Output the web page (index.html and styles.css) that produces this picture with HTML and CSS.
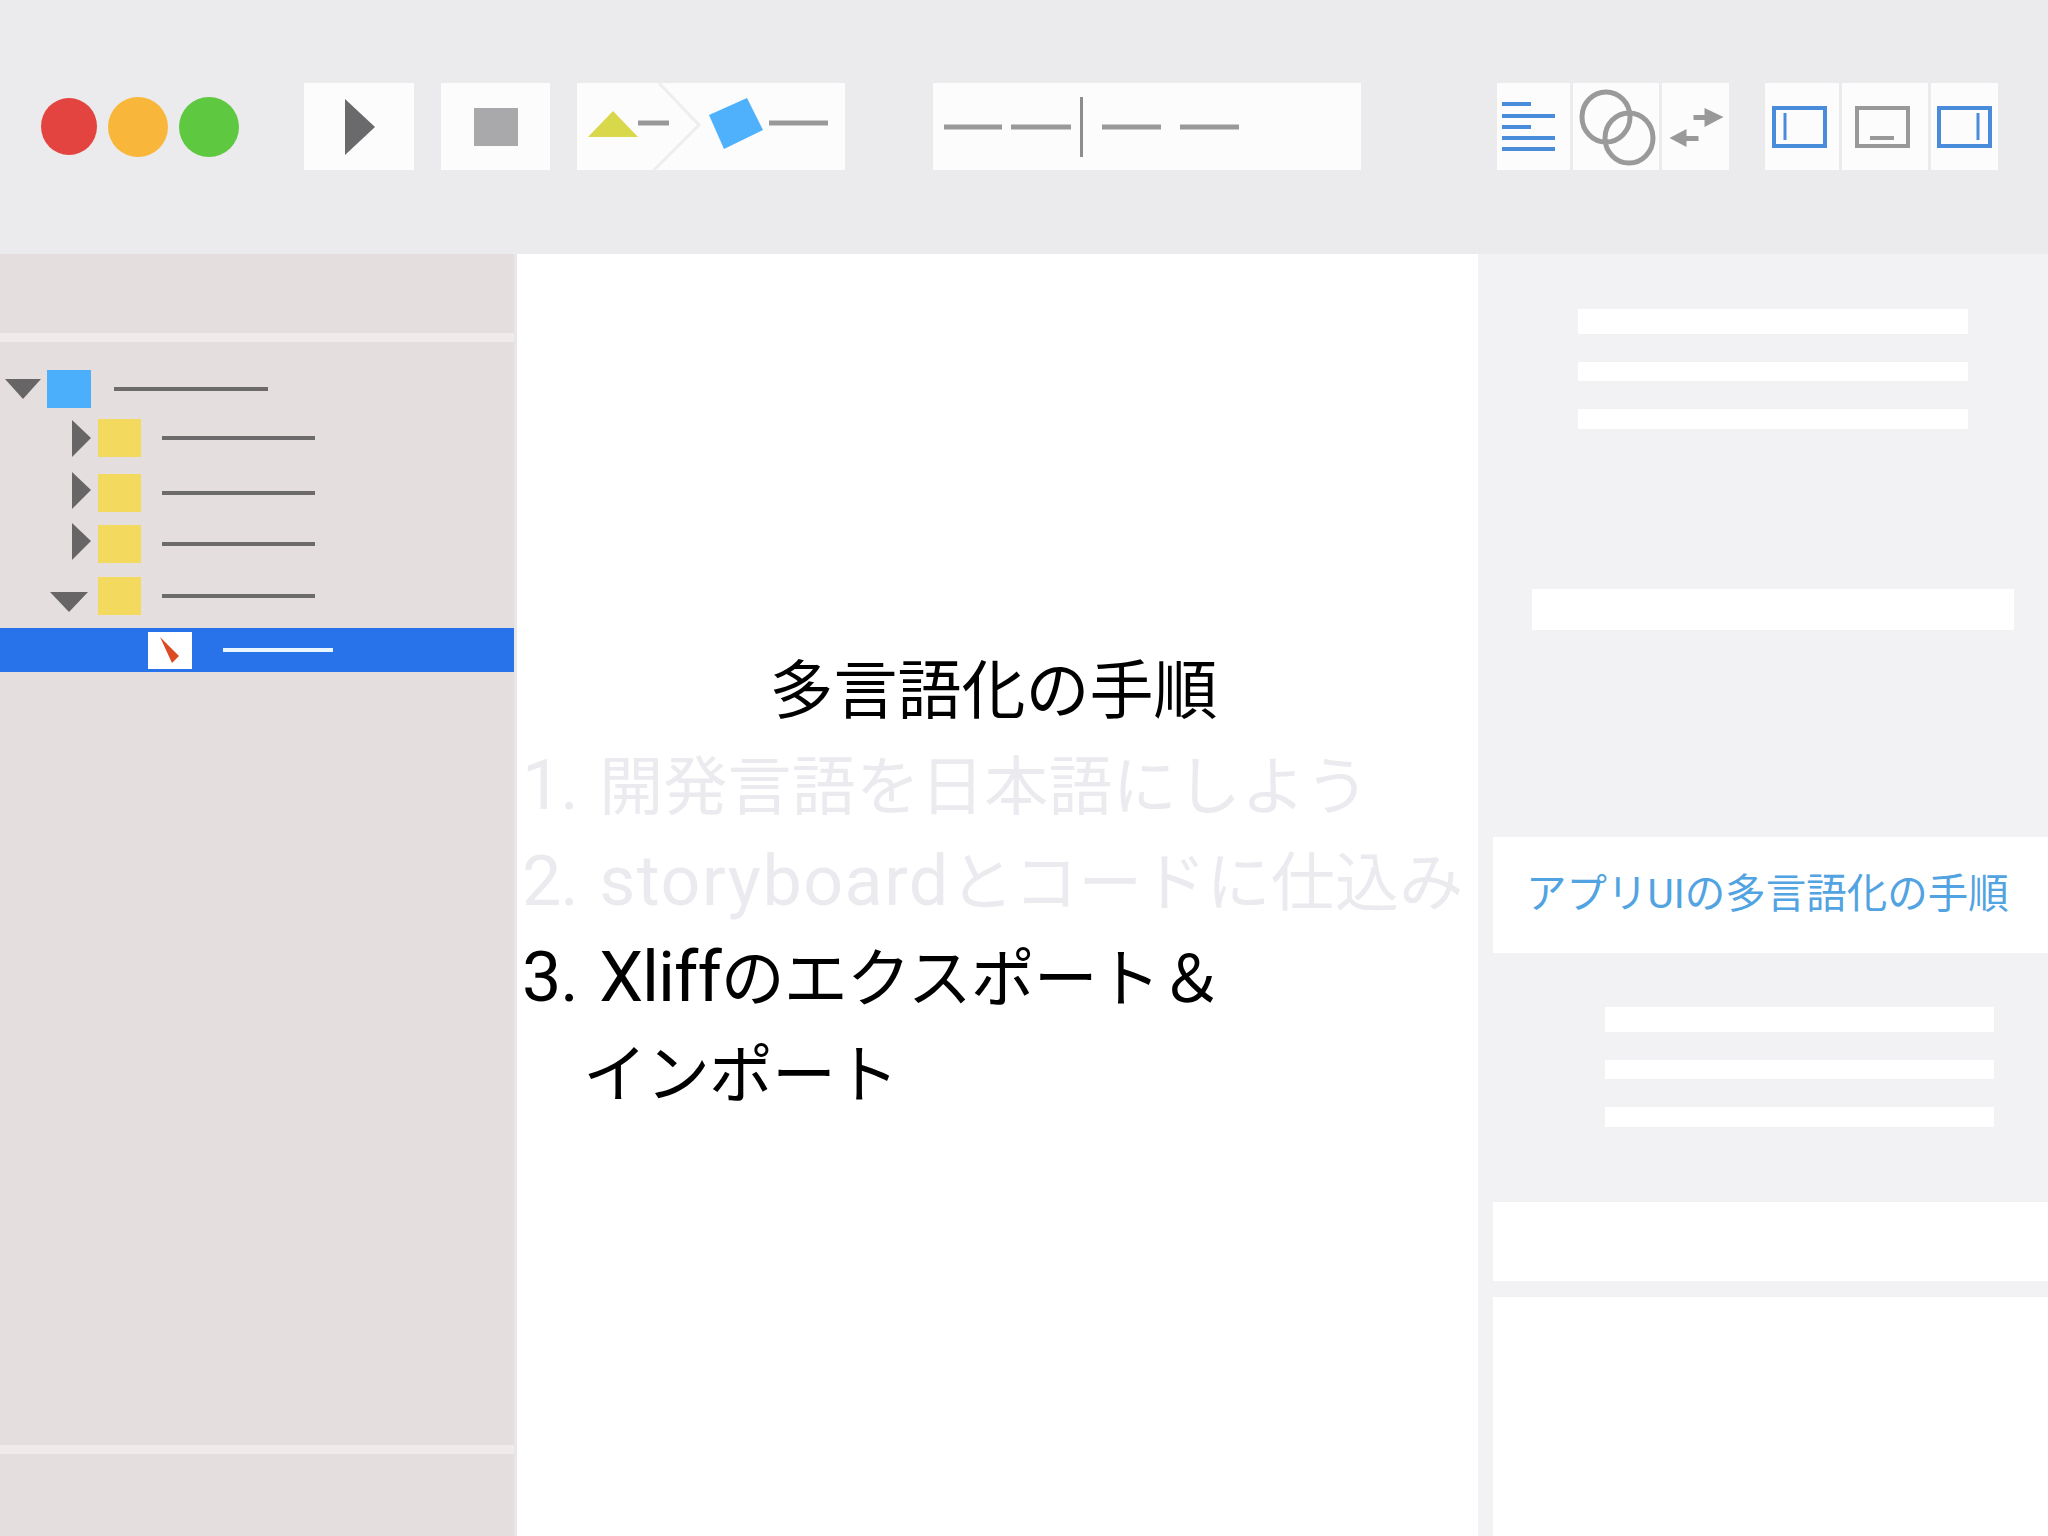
FILE: index.html
```html
<!DOCTYPE html>
<html lang="ja">
<head>
<meta charset="utf-8">
<title>多言語化の手順</title>
<link rel="stylesheet" href="styles.css">
</head>
<body>
<div class="app">
  <header class="toolbar">
    <div class="lights">
      <span class="light red"></span><span class="light orange"></span><span class="light green"></span>
    </div>
    <div class="btn play"><svg viewBox="0 0 110 87"><polygon class="f-dark" points="41,16 71,44 41,72"/></svg></div>
    <div class="btn stop"><svg viewBox="0 0 109 87"><rect class="f-stop" x="33" y="25" width="44" height="38"/></svg></div>
    <div class="btn scheme"><svg viewBox="0 0 268 87">
      <polyline class="s-chevron" points="82,0 122,42 77,87"/>
      <polygon class="f-yellow" points="11,54 36,28 61,54"/>
      <line class="s-gray" x1="61" y1="40" x2="92" y2="40"/>
      <polygon class="f-blue" points="170,15 186,47 147,66 132,32"/>
      <line class="s-gray" x1="192" y1="40" x2="251" y2="40"/>
    </svg></div>
    <div class="btn activity"><svg viewBox="0 0 428 87">
      <line class="s-gray" x1="11" y1="44" x2="69" y2="44"/>
      <line class="s-gray" x1="78" y1="44" x2="138" y2="44"/>
      <line class="s-thin" x1="148.500" y1="14" x2="148.500" y2="74"/>
      <line class="s-gray" x1="169" y1="44" x2="228" y2="44"/>
      <line class="s-gray" x1="247" y1="44" x2="306" y2="44"/>
    </svg></div>
    <div class="group editors">
      <div class="btn ed-a"><svg viewBox="0 0 73 87">
        <line class="s-blue" x1="5" y1="21" x2="34" y2="21"/>
        <line class="s-blue" x1="5" y1="33" x2="58" y2="33"/>
        <line class="s-blue" x1="5" y1="44" x2="34" y2="44"/>
        <line class="s-blue" x1="5" y1="55" x2="58" y2="55"/>
        <line class="s-blue" x1="5" y1="66" x2="58" y2="66"/>
      </svg></div>
      <div class="btn ed-b"><svg viewBox="0 0 86 87">
        <ellipse class="s-ring" cx="33" cy="34" rx="24" ry="25"/>
        <ellipse class="s-ring" cx="56" cy="55" rx="24" ry="25"/>
      </svg></div>
      <div class="btn ed-c"><svg viewBox="0 0 66 87">
        <polygon class="f-arrow" points="31,32 42,32 42,25 61,34 42,44 42,37 31,37"/>
        <polygon class="f-arrow" points="36,53 24,53 24,46 7,55 24,64 24,58 36,58"/>
      </svg></div>
    </div>
    <div class="group panels">
      <div class="btn pn-a"><svg viewBox="0 0 74 87">
        <rect class="s-panel" x="9" y="25" width="51" height="38"/>
        <line class="s-panel-in" x1="20" y1="30" x2="20" y2="57"/>
      </svg></div>
      <div class="btn pn-b"><svg viewBox="0 0 86 87">
        <rect class="s-panel gray" x="15" y="25" width="51" height="38"/>
        <line class="s-panel-in gray" x1="28" y1="55" x2="52" y2="55"/>
      </svg></div>
      <div class="btn pn-c"><svg viewBox="0 0 67 87">
        <rect class="s-panel" x="8" y="25" width="51" height="38"/>
        <line class="s-panel-in" x1="47" y1="30" x2="47" y2="57"/>
      </svg></div>
    </div>
  </header>

  <div class="workspace">
    <aside class="navigator">
      <div class="nav-head"></div>
      <div class="sep"></div>
      <ul class="tree">
        <li class="row root">
          <svg class="tri down" viewBox="0 0 36 20"><polygon points="0,0 36,0 18,20"/></svg>
          <span class="sq blue"></span><span class="ln"></span>
        </li>
        <li class="row lvl gap-a">
          <svg class="tri right" viewBox="0 0 19 37"><polygon points="0,0 19,18 0,37"/></svg>
          <span class="sq yellow"></span><span class="ln"></span>
        </li>
        <li class="row lvl gap-b">
          <svg class="tri right up" viewBox="0 0 19 37"><polygon points="0,0 19,18 0,37"/></svg>
          <span class="sq yellow"></span><span class="ln"></span>
        </li>
        <li class="row lvl gap-c">
          <svg class="tri right up" viewBox="0 0 19 37"><polygon points="0,0 19,18 0,37"/></svg>
          <span class="sq yellow"></span><span class="ln"></span>
        </li>
        <li class="row lvl-open gap-d">
          <svg class="tri down low" viewBox="0 0 38 20"><polygon points="0,0 38,0 19,20"/></svg>
          <span class="sq yellow"></span><span class="ln"></span>
        </li>
        <li class="row selected">
          <span class="file"><svg viewBox="0 0 44 37"><polygon class="f-red" points="12,5 31,24 24,31"/></svg></span>
          <span class="ln light-ln"></span>
        </li>
      </ul>
      <div class="sep bottom"></div>
      <div class="nav-foot"></div>
    </aside>

    <main class="canvas">
      <h1 class="title">多言語化の手順</h1>
      <ol class="steps">
        <li class="step dim"><span class="num">1. </span>開発言語を日本語にしよう</li>
        <li class="step dim"><span class="num">2. </span><span class="lat wide">storyboard</span>とコードに仕込み</li>
        <li class="step current"><span class="num">3. </span><span class="lat tight">Xliff</span>のエクスポート＆<br>インポート</li>
      </ol>
    </main>

    <aside class="inspector">
      <div class="bars top">
        <span class="bar b1"></span><span class="bar b2"></span><span class="bar b3"></span>
      </div>
      <div class="field"></div>
      <div class="card"><span class="card-text">アプリUIの多言語化の手順</span></div>
      <div class="bars lower">
        <span class="bar b1"></span><span class="bar b2"></span><span class="bar b3"></span>
      </div>
      <div class="block"></div>
      <div class="block fill"></div>
    </aside>
  </div>
</div>
</body>
</html>
```

FILE: styles.css
```css
* { box-sizing: border-box; }
html, body { margin: 0; padding: 0; }
body { width: 2048px; height: 1536px; overflow: hidden; background: #fff; font-family: Roboto, "Noto Sans CJK JP", sans-serif; }
.app { display: flex; flex-direction: column; width: 2048px; height: 1536px; }

/* toolbar */
.toolbar { display: flex; align-items: flex-start; height: 254px; padding-top: 83px; background: #ebebed; flex: none; }
.lights { display: flex; align-items: center; gap: 11px; width: 304px; height: 87px; padding-left: 41px; flex: none; }
.light { display: block; width: 60px; height: 60px; border-radius: 50%; }
.light.red { width: 56px; height: 57px; background: #e3443f; }
.light.orange { background: #f8b73a; }
.light.green { background: #5ec840; }
.btn { height: 87px; background: #fdfcfd; flex: none; }
.btn svg { display: block; width: 100%; height: 100%; }
.play { width: 110px; margin-right: 27px; }
.stop { width: 109px; margin-right: 27px; }
.scheme { width: 268px; margin-right: 88px; }
.activity { width: 428px; margin-right: 136px; }
.group { display: flex; gap: 3px; flex: none; }
.editors { margin-right: 36px; }
.ed-a { width: 73px; }
.ed-b { width: 86px; }
.ed-c { width: 67px; }
.pn-a { width: 74px; }
.pn-b { width: 86px; }
.pn-c { width: 67px; }

.f-dark { fill: #6a696b; }
.f-stop { fill: #a9a8aa; }
.f-yellow { fill: #d9d84a; }
.f-blue { fill: #4fb0fb; }
.f-arrow { fill: #999; }
.f-red { fill: #dc4a22; }
.s-chevron { fill: none; stroke: #efeeef; stroke-width: 3; }
.s-gray { stroke: #9a999a; stroke-width: 5; }
.s-thin { stroke: #8e8d8e; stroke-width: 3; }
.s-blue { stroke: #4a8cdc; stroke-width: 4; }
.s-ring { fill: none; stroke: #9a9a9a; stroke-width: 5; }
.s-panel { fill: none; stroke: #4a8cdc; stroke-width: 4; }
.s-panel-in { stroke: #4a8cdc; stroke-width: 3; }
.s-panel.gray { stroke: #999; }
.s-panel-in.gray { stroke: #999; stroke-width: 4; }

/* workspace */
.workspace { display: grid; grid-template-columns: 517px 961px 570px; flex: 1; min-height: 0; }

/* navigator */
.navigator { display: flex; flex-direction: column; background: #e4dede; border-right: 3px solid #e9e6e9; }
.nav-head { height: 79px; flex: none; }
.sep { height: 9px; background: #efebeb; flex: none; }
.sep.bottom { margin-top: auto; }
.nav-foot { height: 82px; flex: none; }
.tree { list-style: none; margin: 0; padding: 21px 0 0; }
.row { display: flex; align-items: center; height: 52px; }
.root { padding-left: 5px; }
.lvl { height: 40px; padding-left: 72px; }
.lvl-open { height: 40px; padding-left: 50px; }
.gap-a { margin-top: 3px; }
.gap-b { margin-top: 15px; }
.gap-c { margin-top: 11px; }
.gap-d { margin-top: 12px; }
.tri { display: block; flex: none; fill: #676566; }
.tri.down { width: 36px; height: 20px; margin-right: 6px; }
.tri.right { width: 19px; height: 37px; margin-right: 7px; }
.tri.low { width: 38px; margin-right: 10px; margin-top: 12px; }
.tri.up { margin-top: -6px; }
.sq { display: block; width: 43px; height: 38px; flex: none; }
.sq.blue { width: 44px; background: #4caffb; }
.sq.yellow { background: #f3d95e; }
.ln { display: block; width: 153px; height: 4px; margin-left: 21px; background: #6d6a6b; flex: none; }
.root .ln { margin-left: 23px; width: 154px; }
.selected { height: 44px; width: 514px; margin-top: 12px; padding-left: 148px; background: #2872ea; }
.file { display: block; width: 44px; height: 37px; background: #fff; flex: none; }
.file svg { display: block; width: 100%; height: 100%; }
.ln.light-ln { width: 110px; margin-left: 31px; background: #eaf6ff; }

/* canvas */
.canvas { background: #fff; padding-top: 390px; color: #000; font-weight: 400; font-size: 64px; line-height: 96px; }
.title { margin: 0; padding-right: 8px; font: inherit; text-align: center; }
.steps { list-style: none; margin: 0; padding: 0 0 0 66px; white-space: nowrap; }
.step { text-indent: -61px; letter-spacing: 0.2px; }
.step.current { letter-spacing: -1px; }
.dim { color: #ebeaee; }
.num, .lat { font-family: Roboto, sans-serif; font-size: 70px; font-weight: 400; line-height: 1; }
.num { letter-spacing: -1px; word-spacing: 5px; }
.lat.wide { letter-spacing: 1.5px; }
.lat.tight { letter-spacing: -1px; }

/* inspector */
.inspector { display: flex; flex-direction: column; background: #f2f1f4; padding-top: 55px; }
.bars { display: flex; flex-direction: column; gap: 28px; flex: none; }
.bars.top { margin-left: 100px; width: 390px; }
.bars.lower { margin: 54px 0 0 127px; width: 389px; }
.bar { display: block; background: #fff; height: 20px; }
.bar.b1 { height: 25px; }
.bar.b2 { height: 19px; }
.field { height: 41px; margin: 160px 0 0 54px; width: 482px; background: #fff; flex: none; }
.card { display: flex; align-items: center; height: 116px; margin: 207px 0 0 15px; padding: 0 0 9px 33px; background: #fff; flex: none; }
.card-text { font-size: 40.5px; font-weight: 400; color: #52a3e1; white-space: nowrap; }
.block { height: 79px; margin: 75px 0 0 15px; background: #fff; flex: none; }
.block.fill { flex: 1; margin-top: 16px; }
```
